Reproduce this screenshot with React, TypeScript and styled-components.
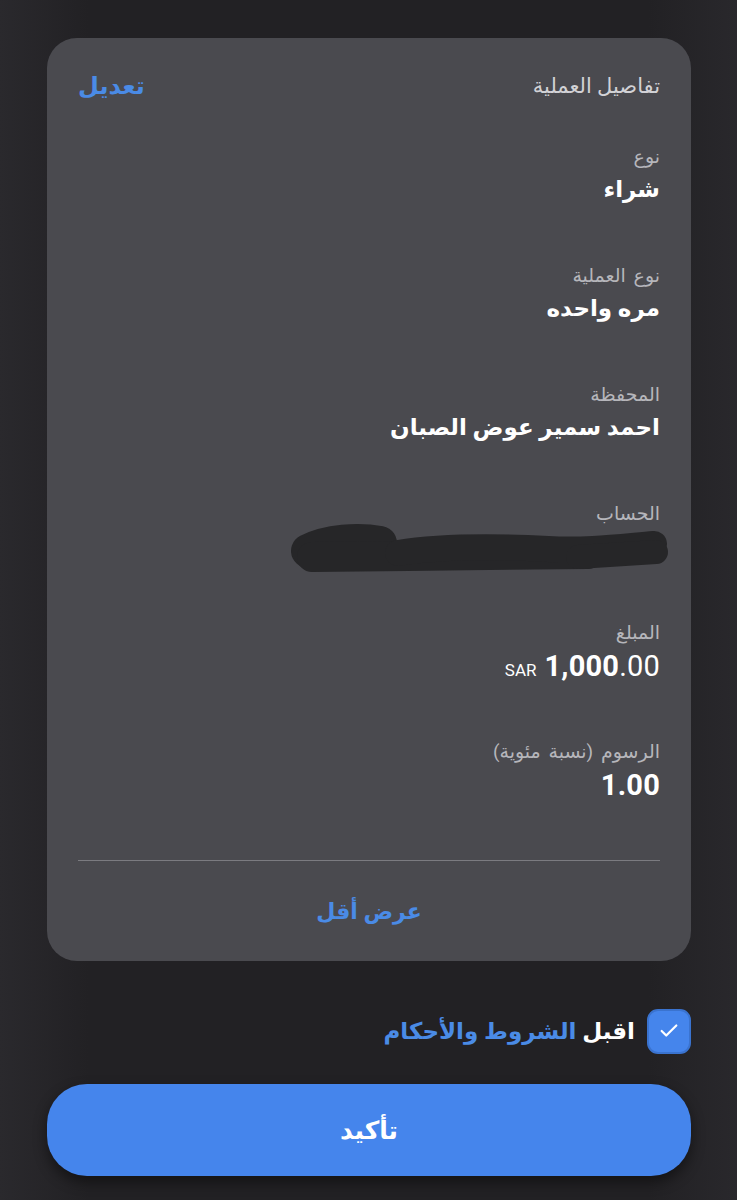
import React, { useState } from "react";
import styled, { createGlobalStyle } from "styled-components";
import { Check } from "lucide-react";

const GlobalStyle = createGlobalStyle`
	html, body {
		margin: 0;
		padding: 0;
		background: #232226;
	}
	body {
		font-family: Roboto, "DejaVu Sans", sans-serif;
		-webkit-font-smoothing: antialiased;
	}
`;

const Page = styled.div`
	direction: rtl;
	width: 737px;
	height: 1200px;
	box-sizing: border-box;
	padding: 38px 46px 0 47px;
	background: linear-gradient(90deg, #2a292d 0%, #222124 12%, #222124 88%, #29282c 100%);
	display: flex;
	flex-direction: column;
`;

const Card = styled.section`
	background: #4a4a4f;
	border-radius: 30px;
	padding: 30px 31px 0 31px;
	display: flex;
	flex-direction: column;
`;

const Header = styled.div`
	display: flex;
	justify-content: space-between;
	align-items: center;
	height: 36px;
`;

const Title = styled.h2`
	margin: 0;
	font-size: 21px;
	font-weight: 400;
	color: #d2d2d6;
`;

const LinkText = styled.a<{ size?: number }>`
	color: #4a8be6;
	font-size: ${p => p.size || 22}px;
	font-weight: 700;
	text-decoration: none;
	cursor: pointer;
`;

const Fields = styled.div`
	display: flex;
	flex-direction: column;
	gap: 53px;
	margin-top: 38px;
`;

const Field = styled.div`
	display: flex;
	flex-direction: column;
	align-items: flex-start;
	height: 66px;
`;

const Label = styled.span`
	font-size: 19px;
	line-height: 30px;
	color: #b6b6bb;
	word-spacing: 3px;
`;

const Value = styled.span`
	font-size: 23px;
	line-height: 36px;
	font-weight: 700;
	color: #ffffff;
`;

const Amount = styled.span`
	direction: ltr;
	display: flex;
	align-items: baseline;
	gap: 8px;
	line-height: 36px;
	color: #ffffff;
`;

const Currency = styled.span`
	font-size: 17px;
	font-weight: 400;
`;

const Number = styled.span`
	font-size: 29px;
	font-weight: 700;
	letter-spacing: 0.2px;
	span {
		font-weight: 400;
	}
`;

const Redacted = styled.svg`
	display: block;
	flex-shrink: 0;
	margin-right: -14px;
	margin-top: -8px;
`;

const Divider = styled.hr`
	border: none;
	height: 1px;
	background: #7b7b80;
	margin: 57px 0 0 0;
	flex-shrink: 0;
`;

const Footer = styled.div`
	display: flex;
	justify-content: center;
	align-items: center;
	height: 100px;
`;

const TermsRow = styled.label`
	display: flex;
	align-items: center;
	gap: 12px;
	margin-top: 47px;
	height: 46px;
	cursor: pointer;
`;

const Box = styled.span<{ checked: boolean }>`
	width: 44px;
	height: 45px;
	box-sizing: border-box;
	border-radius: 11px;
	background: ${p => (p.checked ? "#4585ec" : "transparent")};
	border: 2px solid ${p => (p.checked ? "#3a73cf" : "#8a8a90")};
	display: flex;
	align-items: center;
	justify-content: center;
	color: #fff;
`;

const TermsText = styled.span`
	font-size: 23px;
	font-weight: 700;
	color: #ffffff;
	b {
		color: #4a8be6;
	}
`;

const ConfirmButton = styled.button`
	margin-top: 30px;
	height: 92px;
	flex-shrink: 0;
	border: none;
	border-radius: 40px;
	background: #4585ec;
	color: #ffffff;
	font-family: Roboto, "DejaVu Sans", sans-serif;
	font-size: 25px;
	font-weight: 700;
	box-shadow: 0 6px 14px rgba(0, 0, 0, 0.45);
	cursor: pointer;
`;

const details = [
	{ label: "نوع", value: "شراء" },
	{ label: "نوع العملية", value: "مره واحده" },
	{ label: "المحفظة", value: "احمد سمير عوض الصبان" },
];

const App: React.FC = () => {
	const [accepted, setAccepted] = useState(true);

	return (
		<Page>
			<GlobalStyle />
			<Card>
				<Header>
					<Title>تفاصيل العملية</Title>
					<LinkText size={24}>تعديل</LinkText>
				</Header>

				<Fields>
					{details.map(d => (
						<Field key={d.label}>
							<Label>{d.label}</Label>
							<Value>{d.value}</Value>
						</Field>
					))}

					<Field>
						<Label>الحساب</Label>
						{/* account number is scribbled out in the screenshot */}
						<Redacted width="386" height="54" viewBox="0 0 386 54">
							<g stroke="#262628" strokeLinecap="round" strokeLinejoin="round" fill="none">
								<path d="M20 30 C 40 20, 70 18, 92 22" strokeWidth="34" />
								<path d="M24 36 L 120 35 L 200 34 L 300 33" strokeWidth="30" />
								<path d="M110 32 C 160 24, 220 26, 260 28 C 300 30, 330 26, 366 23" strokeWidth="26" />
								<path d="M290 36 L 368 31" strokeWidth="24" />
							</g>
						</Redacted>
					</Field>

					<Field>
						<Label>المبلغ</Label>
						<Amount>
							<Currency>SAR</Currency>
							<Number>
								1,000<span>.00</span>
							</Number>
						</Amount>
					</Field>

					<Field>
						<Label>الرسوم (نسبة مئوية)</Label>
						<Amount>
							<Number>1.00</Number>
						</Amount>
					</Field>
				</Fields>

				<Divider />
				<Footer>
					<LinkText size={22}>عرض أقل</LinkText>
				</Footer>
			</Card>

			<TermsRow onClick={() => setAccepted(!accepted)}>
				<Box checked={accepted}>{accepted && <Check size={22} strokeWidth={2.4} />}</Box>
				<TermsText>
					اقبل <b>الشروط والأحكام</b>
				</TermsText>
			</TermsRow>

			<ConfirmButton>تأكيد</ConfirmButton>
		</Page>
	);
};

export default App;
